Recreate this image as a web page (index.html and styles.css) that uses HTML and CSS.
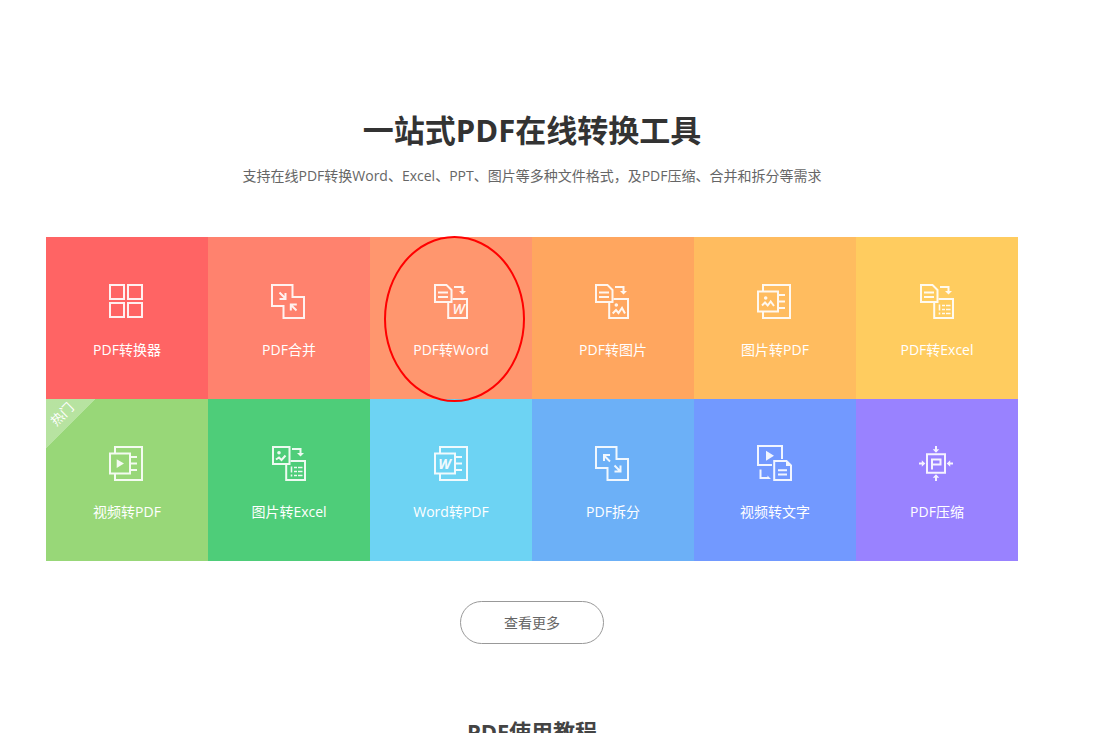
FILE: index.html
```html
<!DOCTYPE html>
<html lang="zh-CN">
<head>
<meta charset="utf-8">
<title>一站式PDF在线转换工具</title>
<link rel="stylesheet" href="styles.css">
</head>
<body>
<svg class="sprite" aria-hidden="true">
  <symbol id="doc-to-box" viewBox="0 0 36 36">
    <path d="M1 1H12.500L17.500 6V18H1ZM4 8.500H14M4 13H14"/>
    <path d="M20 3H28.500V8"/>
    <path class="solid" d="M25 7H32L28.500 10.500Z"/>
    <path d="M14.200 19V34H33V15H18.500"/>
  </symbol>
  <symbol id="page" viewBox="0 0 36 36">
    <path d="M6 7V1H33V34H6V28M1 7.500H21V27.500H1ZM22 11H28M22 17.500H28M22 24H28"/>
  </symbol>
  <symbol id="overlap" viewBox="0 0 36 36">
    <path d="M1 1H21.500V13H33V34H12.500V22H1Z"/>
  </symbol>
  <symbol id="cells" viewBox="0 0 36 36">
    <path d="M19.500 20.500V26.500M19.500 28.500V30.500M22 21.500H25M26 21.500H30.500M22 25.500H25M26 25.500H30.500M22 29.500H25M26 29.500H30.500"/>
  </symbol>
</svg>

<main class="page">
  <header class="intro">
    <h1 class="intro-title">一站式PDF在线转换工具</h1>
    <p class="intro-text">支持在线PDF转换Word、Excel、PPT、图片等多种文件格式，及PDF压缩、合并和拆分等需求</p>
  </header>

  <nav class="tools">
    <a class="tool red" href="#">
      <svg class="icon" viewBox="0 0 36 36"><path d="M1 1H15V15H1ZM19 1H33V15H19ZM1 19H15V33H1ZM19 19H33V33H19Z"/></svg>
      <span>PDF转换器</span>
    </a>
    <a class="tool coral" href="#">
      <svg class="icon" viewBox="0 0 36 36"><use href="#overlap"/><path d="M8.500 8.500L14.500 14.500M14.500 9V15H8.500M25.500 26.500L19.800 20.800M19.800 26.500V20.500H25.800"/></svg>
      <span>PDF合并</span>
    </a>
    <a class="tool salmon" href="#">
      <svg class="icon" viewBox="0 0 36 36"><g transform="translate(1 0)"><use href="#doc-to-box"/><text class="mark light" x="24.500" y="29.500">W</text></g></svg>
      <span>PDF转Word</span>
      <i class="ring"></i>
    </a>
    <a class="tool orange" href="#">
      <svg class="icon" viewBox="0 0 36 36"><use href="#doc-to-box"/><circle class="solid" cx="21.300" cy="21" r="1.800"/><path d="M17.700 29.500L21 26L23.500 29L27 24L30 29.500"/></svg>
      <span>PDF转图片</span>
    </a>
    <a class="tool amber" href="#">
      <svg class="icon" viewBox="0 0 36 36"><use href="#page"/><circle class="solid" cx="8.700" cy="14" r="1.800"/><path d="M5 21.500L8 18.500L10.700 21.500L13.700 17.500L17 22"/></svg>
      <span>图片转PDF</span>
    </a>
    <a class="tool yellow" href="#">
      <svg class="icon" viewBox="0 0 36 36"><g transform="translate(1 0)"><use href="#doc-to-box"/><use class="fine" href="#cells"/></g></svg>
      <span>PDF转Excel</span>
    </a>
    <a class="tool lime" href="#">
      <svg class="icon" viewBox="0 0 36 36"><use href="#page"/><path class="solid" d="M7.700 13.200L15 17.600L7.700 22Z"/></svg>
      <span>视频转PDF</span>
      <b class="hot"><span class="hot-text">热门</span></b>
    </a>
    <a class="tool green" href="#">
      <svg class="icon" viewBox="0 0 36 36"><path d="M2 1H18.500V18H2Z"/><circle class="solid" cx="8" cy="6.800" r="1.800"/><path d="M5 13.500L8 11.500L10.500 14L14.500 9.500M21 3H29.500V8M15.200 19V34H34V15H19.500"/><path class="solid" d="M26 7H33L29.500 10.500Z"/><g transform="translate(1 0)"><use class="fine" href="#cells"/></g></svg>
      <span>图片转Excel</span>
    </a>
    <a class="tool cyan" href="#">
      <svg class="icon" viewBox="0 0 36 36"><g transform="translate(1 0)"><use href="#page"/><text class="mark" x="10.500" y="22.500">W</text></g></svg>
      <span>Word转PDF</span>
    </a>
    <a class="tool sky" href="#">
      <svg class="icon" viewBox="0 0 36 36"><use href="#overlap"/><path d="M15 15.500L9 9.500M9 15V9H15M19.500 19.500L25.200 25.200M19.500 25.500H25.500V19.500"/></svg>
      <span>PDF拆分</span>
    </a>
    <a class="tool blue" href="#">
      <svg class="icon" viewBox="0 0 36 36"><path d="M25 13V0H1V19H15M17.200 15H29.500L34 19.500V34H17.200ZM21 24.200H30M21 28.500H30M3.500 23.500V32H11"/><path class="solid" d="M9 4.700L17 9.700L9 14.700ZM29 14.500V20H34.500ZM10.500 29.500L14 33H10.500Z"/></svg>
      <span>视频转文字</span>
    </a>
    <a class="tool violet" href="#">
      <svg class="icon" viewBox="0 0 36 36"><path d="M8 8.300H26V26.700H8ZM13 23.500V13.500H21.500V18.500H13M17 0V4M17 35V31M0 17.500H4M34 17.500H30"/><path class="solid" d="M13.700 3.300H20.300L17 6.800ZM13.700 31.700H20.300L17 28.200ZM2.800 14.200V20.800L6.300 17.500ZM31.200 14.200V20.800L27.700 17.500Z"/></svg>
      <span>PDF压缩</span>
    </a>
  </nav>

  <button class="more" type="button">查看更多</button>
  <h2 class="tutorial-title">PDF使用教程</h2>
</main>
</body>
</html>
```
FILE: styles.css
```css
* {
  box-sizing: border-box;
}

body {
  margin: 0;
  height: 100vh;
  overflow: hidden;
  background: #fff;
  color: #333;
  font-family: "Open Sans", "Noto Sans CJK SC", sans-serif;
  font-size: 14px;
  line-height: 20px;
}

.sprite {
  position: absolute;
  width: 0;
  height: 0;
}

.page {
  display: flex;
  flex-direction: column;
  align-items: center;
  padding: 107px 102px 0 46px;
}

.intro {
  text-align: center;
}

.intro-title {
  margin: 0;
  font-size: 31px;
  line-height: 46px;
}

.intro-text {
  margin: 13px 0 0;
  color: #666;
}

.tools {
  display: grid;
  grid-template-columns: repeat(6, 1fr);
  width: 100%;
  margin-top: 51px;
}

.tool {
  position: relative;
  display: flex;
  flex-direction: column;
  align-items: center;
  gap: 20px;
  padding-top: 47px;
  aspect-ratio: 1;
  color: #fff;
  text-decoration: none;
}

.icon {
  width: 36px;
  height: 36px;
  overflow: visible;
  fill: none;
  stroke: #fff;
  stroke-width: 2;
  opacity: 0.9;
}

.solid {
  fill: #fff;
  stroke: none;
}

.fine {
  stroke-width: 1.6;
}

.mark {
  fill: #fff;
  stroke: none;
  font: italic bold 14px "Open Sans", sans-serif;
  text-anchor: middle;
}

.light {
  font-weight: 600;
}

.red { background: #ff6464; }
.coral { background: #ff826e; }
.salmon { background: #ff966e; }
.orange { background: #ffa65f; }
.amber { background: #ffbc5f; }
.yellow { background: #ffcc5f; }
.lime { background: #98d778; }
.green { background: #4ecd79; }
.cyan { background: #6dd3f3; }
.sky { background: #6cb0f7; }
.blue { background: #7299ff; }
.violet { background: #9982ff; }

.ring {
  position: absolute;
  z-index: 1;
  top: -1px;
  left: 14px;
  width: 141px;
  height: 166px;
  border: 2px solid #f00;
  border-radius: 50%;
}

.hot {
  position: absolute;
  top: 0;
  left: 0;
  width: 50px;
  height: 50px;
  background: linear-gradient(135deg, rgba(255, 255, 255, 0.3) 50%, transparent 50%);
  font-size: 13px;
  font-weight: 400;
}

.hot-text {
  position: absolute;
  top: 5px;
  left: 3px;
  transform: rotate(-45deg);
}

.more {
  width: 144px;
  height: 43px;
  margin-top: 40px;
  border: 1px solid #999;
  border-radius: 22px;
  background: #fff;
  color: #666;
  font: inherit;
}

.tutorial-title {
  margin: 70px 0 0;
  color: #444;
  font-size: 22px;
  line-height: 34px;
}
```
